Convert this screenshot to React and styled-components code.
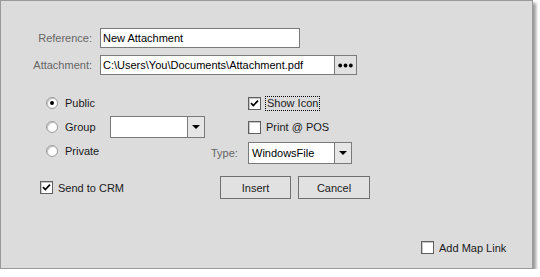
import React from 'react'
import styled, { createGlobalStyle } from 'styled-components'

const GlobalStyle = createGlobalStyle`
    body{
        margin: 0;
        background: #ffffff;
        font-family: "Liberation Sans", Arial, sans-serif;
        font-size: 11px;
    }
`;

const Panel = styled.div`
    box-sizing: border-box;
    width: 533px;
    height: 269px;
    background: #dcdcdc;
    border: 1px solid #9a9a9a;
    box-shadow: 3px 3px 3px rgba(0, 0, 0, 0.4);
    padding-top: 27px;
    display: flex;
    flex-direction: column;
`;

const FieldRow = styled.div`
    display: grid;
    grid-template-columns: 91px auto;
    column-gap: 8px;
    align-items: center;
    margin-top: ${p => p.$top || 0}px;
`;

const Label = styled.span`
    color: #666666;
    text-align: ${p => p.$align || 'right'};
    padding-left: ${p => p.$indent || 0}px;
`;

const Field = styled.div`
    display: flex;
`;

const TextBox = styled.div`
    box-sizing: border-box;
    width: ${p => p.$width}px;
    height: 20px;
    background: #ffffff;
    border: 1px solid #7a7a7a;
    padding: 0 2px;
    display: flex;
    align-items: center;
    color: #000000;
    white-space: nowrap;
    overflow: hidden;
`;

const BrowseButton = styled.div`
    box-sizing: border-box;
    width: 23px;
    height: 20px;
    margin-left: -1px;
    background: #e1e1e1;
    border: 1px solid #7a7a7a;
    display: flex;
    align-items: center;
    justify-content: center;
`;

const Options = styled.div`
    margin-left: 39px;
    margin-top: 16px;
    display: grid;
    grid-template-columns: 70px 100px 38px 1fr;
    grid-template-rows: 24px 24px 24px 36px;
    align-items: center;
`;

const Item = styled.label`
    display: flex;
    align-items: center;
    gap: ${p => p.$gap || 5}px;
    color: #1a1a1a;
    grid-column: ${p => p.$col || 'auto'};
    grid-row: ${p => p.$row || 'auto'};
    padding-left: ${p => p.$indent || 0}px;
    align-self: ${p => p.$self || 'center'};
    height: ${p => (p.$self === 'end' ? '23px' : 'auto')};
`;

const Radio = styled.span`
    box-sizing: border-box;
    width: 12px;
    height: 12px;
    border-radius: 50%;
    background: #ffffff;
    border: 1px solid #9a9a9a;
    box-shadow: inset 1px 1px 1px rgba(0, 0, 0, 0.25);
    display: flex;
    align-items: center;
    justify-content: center;
    &::after{
        content: '';
        width: 4px;
        height: 4px;
        border-radius: 50%;
        background: ${p => (p.$checked ? '#000000' : 'transparent')};
    }
`;

const Box = styled.span`
    box-sizing: border-box;
    width: 13px;
    height: 13px;
    background: #ffffff;
    border: 1px solid #5f5f5f;
    box-shadow: inset 1px 1px 0 #c8c8c8;
    display: flex;
    align-items: center;
    justify-content: center;
`;

const FocusText = styled.span`
    outline: 1px dotted #000000;
    outline-offset: 0;
    padding: 0 1px;
    line-height: 13px;
`;

const Combo = styled.div`
    box-sizing: border-box;
    width: ${p => p.$width}px;
    height: 22px;
    background: #ffffff;
    border: 1px solid #7a7a7a;
    display: flex;
    grid-column: ${p => p.$col};
    grid-row: ${p => p.$row};
    margin-top: ${p => p.$shift || 0}px;
`;

const ComboText = styled.div`
    flex: 1;
    display: flex;
    align-items: center;
    padding-left: 3px;
    color: #000000;
`;

const ComboButton = styled.div`
    width: 16px;
    border-left: 1px solid #7a7a7a;
    background: #e6e6e6;
    display: flex;
    align-items: center;
    justify-content: center;
`;

const TypeLabel = styled(Label)`
    grid-column: 3;
    grid-row: 3;
    margin-top: ${p => p.$shift || 0}px;
`;

const ButtonBar = styled.div`
    grid-column: 3 / 5;
    grid-row: 4;
    align-self: end;
    padding-left: 10px;
    display: flex;
    gap: 7px;
`;

const Button = styled.div`
    box-sizing: border-box;
    width: ${p => p.$width}px;
    height: 23px;
    background: #e1e1e1;
    border: 1px solid #707070;
    display: flex;
    align-items: center;
    justify-content: center;
    color: #1a1a1a;
`;

const Footer = styled.div`
    margin-top: auto;
    padding-left: 420px;
    padding-bottom: 14px;
    display: flex;
`;

const Check = () => (
    <svg width="9" height="9" viewBox="0 0 9 9">
        <path d="M1 4.2 L3.3 6.6 L8 1.6" fill="none" stroke="#000" strokeWidth="1.7" />
    </svg>
)

const Arrow = () => (
    <svg width="8" height="4" viewBox="0 0 8 4">
        <path d="M0 0 L8 0 L4 4 Z" fill="#000" />
    </svg>
)

const Dots = () => (
    <svg width="15" height="5" viewBox="0 0 15 5">
        <circle cx="2.2" cy="2.5" r="1.9" fill="#000" />
        <circle cx="7.5" cy="2.5" r="1.9" fill="#000" />
        <circle cx="12.8" cy="2.5" r="1.9" fill="#000" />
    </svg>
)

const CheckBox = ({ checked }) => <Box>{checked && <Check />}</Box>

const App = () => {
    return (
        <>
            <GlobalStyle />
            <Panel>
                <FieldRow>
                    <Label>Reference:</Label>
                    <Field>
                        <TextBox $width={200}>New Attachment</TextBox>
                    </Field>
                </FieldRow>
                <FieldRow $top={7}>
                    <Label>Attachment:</Label>
                    <Field>
                        <TextBox $width={235}>C:\Users\You\Documents\Attachment.pdf</TextBox>
                        <BrowseButton><Dots /></BrowseButton>
                    </Field>
                </FieldRow>

                <Options>
                    <Item $col={1} $row={1} $indent={6} $gap={7}>
                        <Radio $checked /> Public
                    </Item>
                    <Item $col={1} $row={2} $indent={6} $gap={7}>
                        <Radio /> Group
                    </Item>
                    <Combo $col={2} $row={2} $width={95}>
                        <ComboText />
                        <ComboButton><Arrow /></ComboButton>
                    </Combo>
                    <Item $col={1} $row={3} $indent={6} $gap={7}>
                        <Radio /> Private
                    </Item>

                    <Item $col={4} $row={1}>
                        <CheckBox checked />
                        <FocusText>Show Icon</FocusText>
                    </Item>
                    <Item $col={4} $row={2}>
                        <CheckBox /> Print @ POS
                    </Item>
                    <TypeLabel $align="left" $indent={1} $shift={3}>Type:</TypeLabel>
                    <Combo $col={4} $row={3} $width={104} $shift={3}>
                        <ComboText>WindowsFile</ComboText>
                        <ComboButton><Arrow /></ComboButton>
                    </Combo>

                    <Item $col="1 / 3" $row={4} $self="end">
                        <CheckBox checked /> Send to CRM
                    </Item>
                    <ButtonBar>
                        <Button $width={71}>Insert</Button>
                        <Button $width={72}>Cancel</Button>
                    </ButtonBar>
                </Options>

                <Footer>
                    <Item>
                        <CheckBox /> Add Map Link
                    </Item>
                </Footer>
            </Panel>
        </>
    )
}

export default App
